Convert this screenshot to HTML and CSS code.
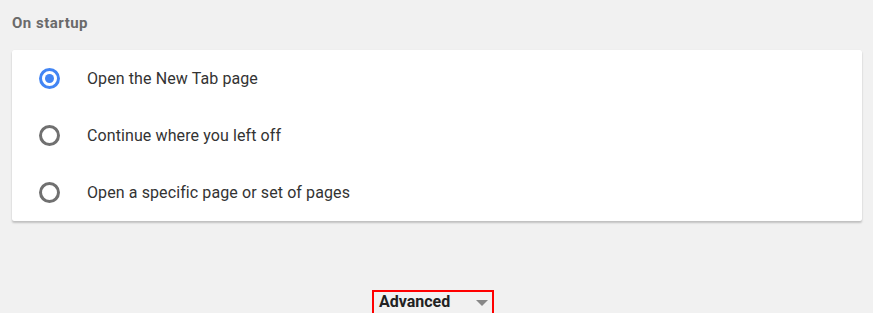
FILE: index.html
```html
<!DOCTYPE html>
<html lang="en">
<head>
    <meta charset="UTF-8">
    <title>Settings</title>
    <link rel="stylesheet" href="styles.css">
</head>
<body>
<div class="page">
    <h2 class="section-title">On startup</h2>

    <div class="card">
        <label class="option">
            <span class="radio checked"></span>
            <span class="label">Open the New Tab page</span>
        </label>
        <label class="option">
            <span class="radio"></span>
            <span class="label">Continue where you left off</span>
        </label>
        <label class="option">
            <span class="radio"></span>
            <span class="label">Open a specific page or set of pages</span>
        </label>
    </div>

    <div class="advanced-row">
        <div class="advanced">
            <span>Advanced</span>
            <span class="arrow"></span>
        </div>
    </div>
</div>
</body>
</html>
```

FILE: styles.css
```css
body {
    margin: 0;
    background-color: #f1f1f1;
    font-family: Roboto, "Liberation Sans", sans-serif;
    overflow: hidden;
}

.page {
    padding: 0 11px 0 12px;
}

.section-title {
    margin: 0;
    padding-top: 14px;
    height: 36px;
    font-size: 15px;
    font-weight: bold;
    letter-spacing: 0.5px;
    color: #6a6a6a;
}

.card {
    background-color: #fff;
    border-radius: 2px;
    box-shadow: 0 2px 2px rgba(0, 0, 0, 0.2), 0 0 1px rgba(0, 0, 0, 0.08);
}

.option {
    display: flex;
    align-items: center;
    height: 57px;
    padding-left: 27px;
}

.radio {
    width: 15px;
    height: 15px;
    border: 3px solid #707070;
    border-radius: 50%;
    box-sizing: content-box;
    position: relative;
    margin-right: 27px;
}

.radio.checked {
    border-color: #4285f4;
}

.radio.checked::after {
    content: "";
    position: absolute;
    left: 3px;
    top: 3px;
    width: 9px;
    height: 9px;
    border-radius: 50%;
    background-color: #4285f4;
}

.label {
    font-size: 16px;
    letter-spacing: 0.1px;
    color: #333;
}

.advanced-row {
    display: flex;
    justify-content: center;
    padding-top: 69px;
    padding-right: 8px;
}

.advanced {
    display: flex;
    width: 122px;
    height: 30px;
    padding: 0 3px 0 5px;
    border: 2px solid #f00;
    box-sizing: border-box;
    align-items: flex-start;
    font-size: 16px;
    font-weight: bold;
    color: #222;
}

.advanced span:first-child {
    flex: 1;
}

.arrow {
    margin-top: 8px;
    margin-right: 1px;
    border-left: 6px solid transparent;
    border-right: 6px solid transparent;
    border-top: 6px solid #888;
}
```
